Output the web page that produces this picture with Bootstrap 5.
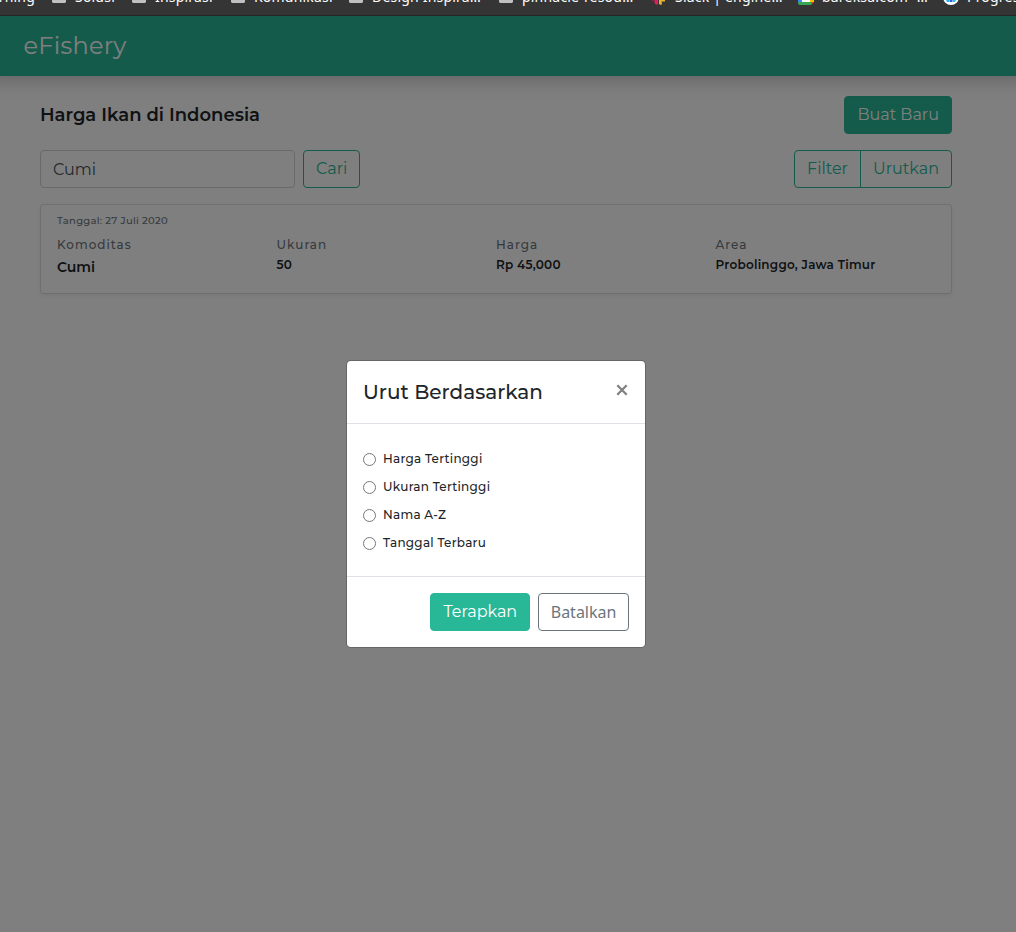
<!DOCTYPE html>
<html lang="id">
<head>
<meta charset="utf-8">
<meta name="viewport" content="width=device-width, initial-scale=1">
<title>eFishery</title>
<link rel="stylesheet" href="https://cdn.jsdelivr.net/npm/bootstrap@5.3.0/dist/css/bootstrap.min.css">
<style>
  :root { --brand: #28b797; --ui: Montserrat, Inter, sans-serif; --sys: "Noto Sans", sans-serif; }
  body { font-family: var(--ui); color: #212529; height: 932px; overflow: hidden; }
  .bookmarks { height: 16px; background: #353535; border-bottom: 1px solid #262626; font: 14px/20px var(--sys); color: #fff; overflow: hidden; }
  .bookmarks-row { display: grid; grid-template-columns: 52px 80px 99px 118px 150px 153px 147px 145px 120px; margin-top: -13px; height: 20px; white-space: nowrap; letter-spacing: .2px; }
  .mark-icon { width: 14px; height: 14px; margin-top: 2px; flex: none; }
  .mark-item { display: flex; gap: 9px; }
  .app { height: 916px; }
  .app-bar { height: 60px; background: var(--brand); box-shadow: 0 8px 16px rgba(0,0,0,.15), 0 0 10px rgba(0,0,0,.06); margin: 0 -16px; padding: 0 16px; }
  .app-bar .navbar-brand { font-size: 24px; color: #fff; letter-spacing: .26px; line-height: 36px; margin-left: 23.5px; }
  .page { width: 912px; margin-left: 40px; padding-top: 20px; }
  .page-title { font-size: 18px; font-weight: 600; line-height: 27px; }
  .btn, .form-control { border-radius: 4px; height: 38px; }
  .form-control { font-weight: 400; }
  .btn { padding: 6px 12px; font-weight: 400; line-height: 24px; }
  .btn-brand { background: var(--brand); border-color: var(--brand); color: #fff; }
  .btn-line { border-color: var(--brand); color: var(--brand); }
  .search { width: 255px; border-color: #ced4da; color: #495057; }
  .price-card { height: 90px; border-radius: 4px; border-color: rgba(0,0,0,.125); }
  .price-date { font-size: 10px; font-weight: 500; line-height: 15px; letter-spacing: .27px; color: #6c757d; }
  .cap { font-size: 12px; font-weight: 500; line-height: 18px; letter-spacing: 1px; color: #6c757d; }
  .val { font-size: 12px; font-weight: 600; line-height: 22px; letter-spacing: .25px; }
  .val-lg { font-size: 14px; line-height: 27px; letter-spacing: 0; }
  .overlay { background: rgba(0,0,0,.5); padding: 344px 24px 0 0; }
  .sort-dialog { width: 300px; height: 288px; border-radius: 4.8px; border: 1px solid rgba(0,0,0,.2); background: #fff; background-clip: padding-box; }
  .sort-dialog .modal-header { height: 63px; padding: 16px; border-bottom: 1px solid #dee2e6; }
  .sort-dialog .modal-title { font-size: 20px; font-weight: 500; line-height: 30px; }
  .sort-dialog .modal-body { padding: 21px 16px 0; }
  .sort-dialog .modal-footer { height: 71px; padding: 16px; gap: 8px; border-top: 1px solid #dee2e6; }
  .sort-dialog .modal-footer > * { margin: 0; }
  .close-x { margin-top: -4px; }
  .option { height: 28px; font-size: 12px; font-weight: 500; letter-spacing: .26px; gap: 7px; }
  .option input { width: 13px; height: 13px; margin: 0; }
  .option span { line-height: 28px; height: 28px; }
  .btn-cancel { font-family: var(--sys); color: #6c757d; border-color: #6c757d; padding: 6px 11.6px; }
</style>
</head>
<body>
<div class="bookmarks">
  <div class="bookmarks-row">
    <div class="mark-item"><span style="margin-left:-25px">Learning</span></div>
    <div class="mark-item"><svg class="mark-icon" viewBox="0 0 14 14"><path d="M0 1h5l2 2h7v10l-1 1H1l-1-1z" fill="#c0c0c0"/></svg>Solusi</div>
    <div class="mark-item"><svg class="mark-icon" viewBox="0 0 14 14"><path d="M0 1h5l2 2h7v10l-1 1H1l-1-1z" fill="#c0c0c0"/></svg>Inspirasi</div>
    <div class="mark-item"><svg class="mark-icon" viewBox="0 0 14 14"><path d="M0 1h5l2 2h7v10l-1 1H1l-1-1z" fill="#c0c0c0"/></svg>Komunikasi</div>
    <div class="mark-item"><svg class="mark-icon" viewBox="0 0 14 14"><path d="M0 1h5l2 2h7v10l-1 1H1l-1-1z" fill="#c0c0c0"/></svg>Design Inspira…</div>
    <div class="mark-item"><svg class="mark-icon" viewBox="0 0 14 14"><path d="M0 1h5l2 2h7v10l-1 1H1l-1-1z" fill="#c0c0c0"/></svg>pinnacle-resou…</div>
    <div class="mark-item"><svg class="mark-icon overflow-visible" viewBox="0 0 14 14"><path d="M-2 9.500h3.500v2H0zM2.500 9H6v6.500H4L2.500 14z" fill="#e01e5a"/><path d="M7 11h6v1.500h-3.500L10 15l-1 1-2-1z" fill="#ecb22e"/></svg>Slack | engine…</div>
    <div class="mark-item"><svg class="mark-icon overflow-visible" viewBox="0 0 14 14"><path d="M-1 2h10v11H-1z" fill="#4285f4"/><path d="M3 10h8v3H3z" fill="#fff"/><path d="M11 4h4v9h-4z" fill="#fbbc04"/><path d="M-1 13h13v3H1q-2 0-2-2z" fill="#34a853"/><path d="M12 13h3l-3 3z" fill="#ea4335"/></svg>bareksa.com -…</div>
    <div class="mark-item"><svg class="mark-icon overflow-visible" viewBox="0 0 14 14"><circle cx="7" cy="8" r="8" fill="#fff"/><path d="M1 9h4v4H3z" fill="#19b5f1"/><path d="M5.500 9h3v4h-3z" fill="#315bef"/><path d="M9 9h4l-2 4H9z" fill="#21c9d6"/></svg>Progress</div>
  </div>
</div>

<div class="app position-relative overflow-hidden">
  <nav class="app-bar navbar"><span class="navbar-brand p-0">eFishery</span></nav>
  <main class="page">
    <div class="d-flex justify-content-between align-items-center mb-3">
      <h1 class="page-title mb-0">Harga Ikan di Indonesia</h1>
      <button class="btn btn-brand">Buat Baru</button>
    </div>
    <div class="d-flex justify-content-between mb-3">
      <div class="d-flex gap-2">
        <input class="form-control search" value="Cumi" aria-label="Komoditas">
        <button class="btn btn-line">Cari</button>
      </div>
      <div class="btn-group">
        <button class="btn btn-line">Filter</button>
        <button class="btn btn-line">Urutkan</button>
      </div>
    </div>
    <div class="card price-card shadow-sm">
      <div class="card-body px-3 pt-2 pb-0">
        <div class="price-date">Tanggal: 27 Juli 2020</div>
        <div class="row g-0 row-cols-4 pt-2">
          <div><div class="cap">Komoditas</div><div class="val val-lg">Cumi</div></div>
          <div><div class="cap">Ukuran</div><div class="val">50</div></div>
          <div><div class="cap">Harga</div><div class="val">Rp 45,000</div></div>
          <div><div class="cap">Area</div><div class="val">Probolinggo, Jawa Timur</div></div>
        </div>
      </div>
    </div>
  </main>

  <div class="overlay position-absolute top-0 start-0 w-100 h-100 d-flex justify-content-center align-items-start">
    <div class="modal-content sort-dialog" role="dialog">
      <div class="modal-header">
        <h2 class="modal-title">Urut Berdasarkan</h2>
        <svg class="close-x" width="14" height="14" viewBox="0 0 14 14"><path d="M2.300 2.300l9.400 9.400M11.700 2.300l-9.400 9.400" stroke="#7f7f7f" stroke-width="2.200"/></svg>
      </div>
      <div class="modal-body">
        <label class="option d-flex align-items-center"><input type="radio" name="sort"><span>Harga Tertinggi</span></label>
        <label class="option d-flex align-items-center"><input type="radio" name="sort"><span>Ukuran Tertinggi</span></label>
        <label class="option d-flex align-items-center"><input type="radio" name="sort"><span>Nama A-Z</span></label>
        <label class="option d-flex align-items-center"><input type="radio" name="sort"><span>Tanggal Terbaru</span></label>
      </div>
      <div class="modal-footer">
        <button class="btn btn-brand">Terapkan</button>
        <button class="btn btn-cancel">Batalkan</button>
      </div>
    </div>
  </div>
</div>
<script src="https://cdn.jsdelivr.net/npm/bootstrap@5.3.0/dist/js/bootstrap.bundle.min.js"></script>
</body>
</html>
